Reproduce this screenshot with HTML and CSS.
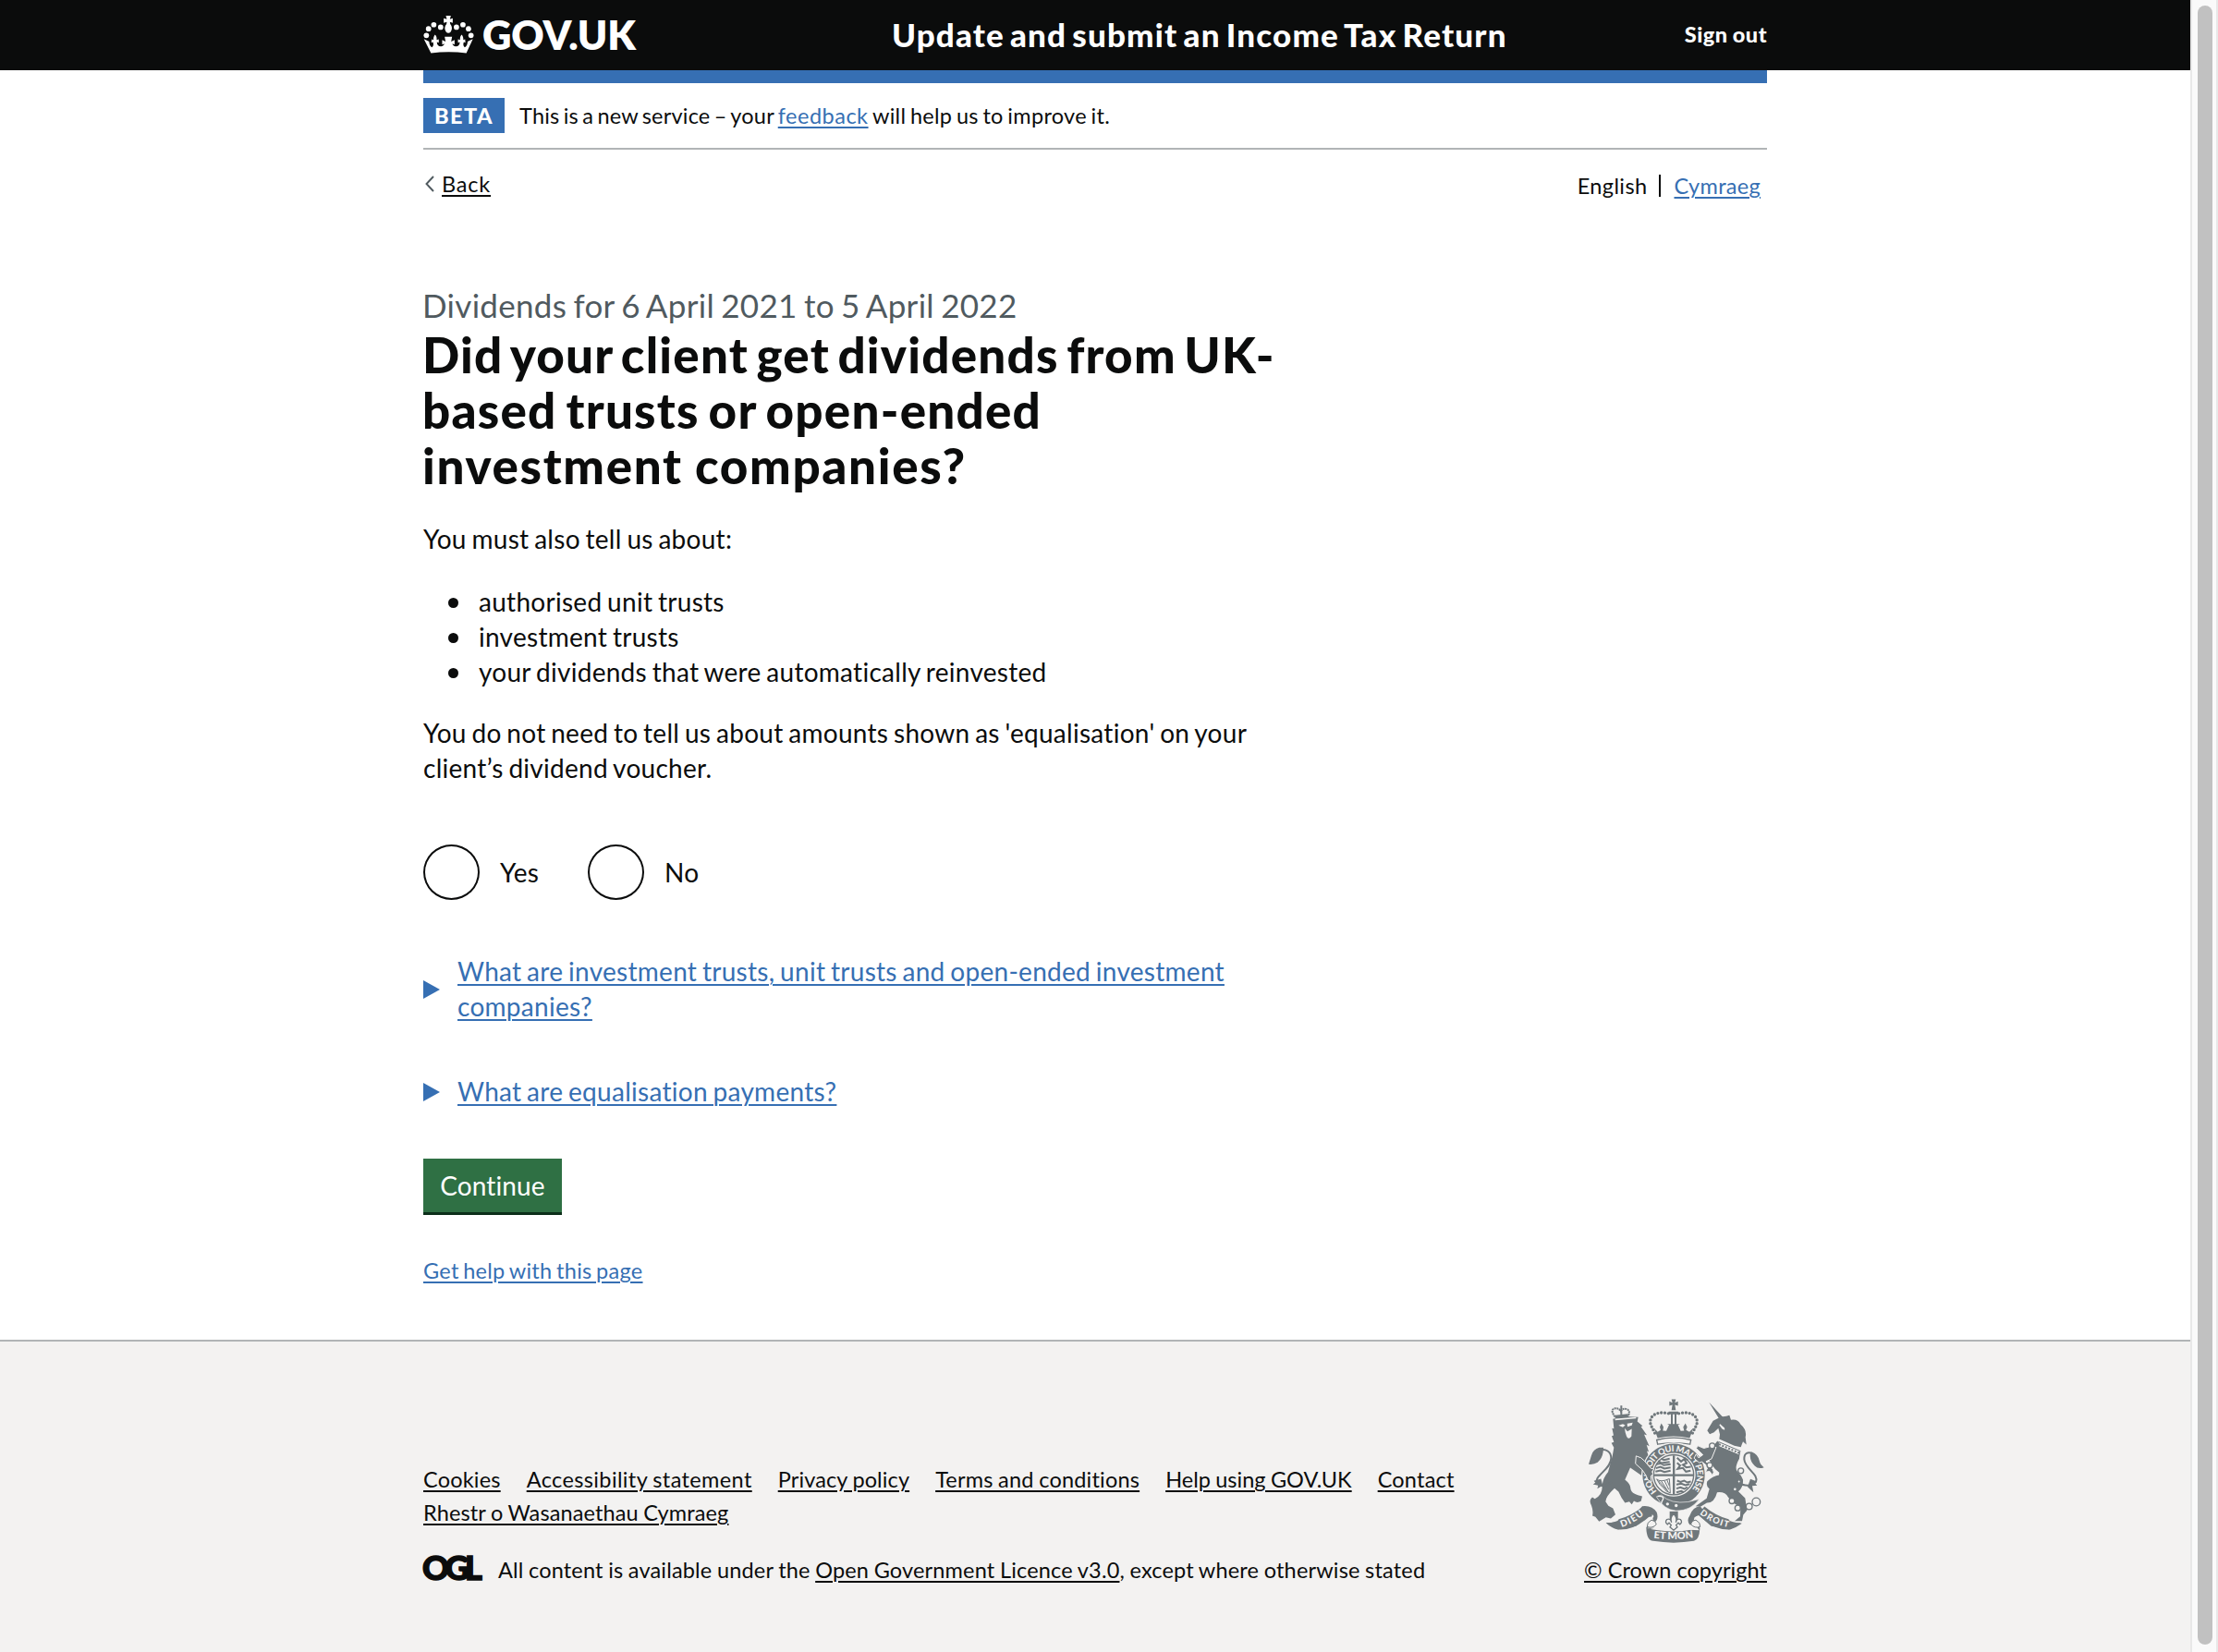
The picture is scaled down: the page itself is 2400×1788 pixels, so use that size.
FILE: index.html
```
<!DOCTYPE html>
<html lang="en">
<head>
<meta charset="utf-8">
<title>Update and submit an Income Tax Return - GOV.UK</title>
<link rel="stylesheet" href="styles.css">
</head>
<body>
<div class="page">
<header class="header">
  <div class="container header-row">
    <a class="logo" href="#">
      <svg class="crown" viewBox="24 20 164 122" fill="#fff">
        <circle cx="34" cy="83.500" r="8.500"/><circle cx="41" cy="62" r="8.500"/><circle cx="58" cy="49" r="8.500"/><circle cx="80" cy="57" r="8.500"/>
        <circle cx="131" cy="57" r="8.500"/><circle cx="152" cy="49" r="8.500"/><circle cx="170" cy="62" r="8.500"/><circle cx="178" cy="83.500" r="8.500"/>
        <path d="M97 20h16l-3 11 9-3v15l-9-3 1 7c5 6 7 13 4 20-2 5-5 9-10 9s-8-4-10-9c-3-7-1-14 4-20l1-7-10 3V28l10 3z"/>
        <path d="M26 95l17 8c0 8 3 15 9 19 5-5 6-10 3-17l-5 2 1-11 6 2c-1-6 1-12 5-17 5 5 6 11 5 17l7-2v11l-6-2c0 9 5 14 13 14 6-1 10-4 11-9l-7 3V98l11 5-3-15h24l-3 15 11-5v15l-7-3c1 5 5 8 11 9 8 0 13-5 13-14l-6 2V96l7 2c-1-6 0-12 5-17 4 5 6 11 5 17l6-2 1 11-5-2c-3 7-2 12 3 17 6-4 9-11 9-19l17-8-21 46c-37-5-77-5-114 0z"/>
      </svg>
      <span class="logo-text">GOV.UK</span>
    </a>
    <a class="service-name" href="#">Update and submit an Income Tax Return</a>
    <a class="sign-out" href="#">Sign out</a>
  </div>
</header>
<div class="container">
  <div class="blue-bar"></div>
  <div class="phase">
    <strong class="tag">BETA</strong>
    <span class="phase-text">This is a new service – your <a class="link feedback" href="#">feedback</a> <span class="phase-end">will help us to improve it.</span></span>
  </div>
  <div class="subnav">
    <a class="back" href="#"><svg class="chevron" viewBox="0 0 10 18"><path d="M9 1L1.500 9 9 17" fill="none" stroke="#505a5f" stroke-width="1.900"/></svg><span class="back-text">Back</span></a>
    <div class="languages"><span class="english">English</span><span class="divider"></span><a class="link cymraeg" href="#">Cymraeg</a></div>
  </div>
  <main class="main">
    <h1 class="heading"><span class="caption">Dividends for 6 April 2021 to 5 April 2022</span>
      <span class="title t1">Did your client get dividends from UK-</span>
      <span class="title t2">based trusts or open-ended</span>
      <span class="title t3">investment companies?</span>
    </h1>
    <p class="body intro">You must also tell us about:</p>
    <ul class="list">
      <li>authorised unit trusts</li>
      <li>investment trusts</li>
      <li>your dividends that were automatically reinvested</li>
    </ul>
    <p class="body">You do not need to tell us about amounts shown as 'equalisation' on your client’s dividend voucher.</p>
    <div class="radios">
      <label class="radio"><span class="ring"></span><span class="radio-label yes">Yes</span></label>
      <label class="radio"><span class="ring"></span><span class="radio-label">No</span></label>
    </div>
    <div class="details first"><span class="arrow"></span><a class="link" href="#">What are investment trusts, unit trusts and open-ended investment companies?</a></div>
    <div class="details second"><span class="arrow"></span><a class="link" href="#">What are equalisation payments?</a></div>
    <button class="button">Continue</button>
    <p class="help"><a class="link" href="#">Get help with this page</a></p>
  </main>
</div>
<footer class="footer">
  <div class="container footer-row">
    <div class="footer-main">
      <ul class="footer-links">
        <li><a class="a1" href="#">Cookies</a></li><li><a class="a2" href="#">Accessibility statement</a></li><li><a class="a3" href="#">Privacy policy</a></li><li><a class="a4" href="#">Terms and conditions</a></li><li><a class="a5" href="#">Help using GOV.UK</a></li><li><a class="a6" href="#">Contact</a></li><li><a class="a7" href="#">Rhestr o Wasanaethau Cymraeg</a></li>
      </ul>
      <div class="licence">
        <svg class="ogl" viewBox="0 0 62 26"><text x="-1" y="25.500" textLength="65" lengthAdjust="spacing">OGL</text></svg>
        <span class="licence-text">All content is available under the <a href="#">Open Government Licence v3.0</a>, except where otherwise stated</span>
      </div>
    </div>
    <div class="copyright">
      <svg class="crest" viewBox="80 68 576 470" fill="#6f777b">
        <defs>
          <path id="ring-text" d="M308 371A76 76 0 1 1 416 371"/>
          <path id="left-text" d="M193 487Q234 475 272 441"/>
          <path id="mid-text" d="M297 523Q362 531 430 521"/>
          <path id="right-text" d="M446 444Q490 478 540 488"/>
        </defs>
        <!-- crown above the shield -->
        <path d="M355 72h14l-3 11 10-4v14l-10-3 3 17h-14l3-17-10 3V79l10 4zM346 112h31v9h-31zM353 121h6v34h-6zM365 121h6v34h-6z"/>
        <path d="M345 118C300 107 276 133 290 160q7 13 14 29M379 118c45-11 69 15 55 42q-7 13-14 29" fill="none" stroke="#6f777b" stroke-width="10" stroke-linecap="round" stroke-dasharray="0 11.500"/>
        <path d="M298 165l12 13 10-6-3-10 5-12 7 12-2 12 11 1 9-20-6-3h42l-7 3 9 20 11-1-3-12 7-12 6 12-4 10 11 6 13-13-12 33q-52-12-104 0z"/>
        <path d="M307 204q55-14 111 0l-3 14q-53-9-105 0z" fill="none" stroke="#6f777b" stroke-width="4"/>
        <!-- lion -->
        <path d="M172 129q-16-20-4-27 14-4 22 8 10-12 22-5 11 7 0 25" fill="none" stroke="#6f777b" stroke-width="6" stroke-dasharray="6 2"/>
        <path d="M189 92h6v34h-6zM172 124l42-5v8l-42 7zM165 136q27-10 55-8l27 2-3 14 17 14-5 3 19 27-9-2 17 38-9-4 7 22-6-2 8 24q-24 16-22 58l-40-28-17 39q20 16 18 30 4 15 24 20l14 4-4 16q-13 7-23-1l-7 11-8-9-14 4q-12-15-21-36l-13-11q-28 26-29 43l9 14 15 8 8 20-15 13-16-4-22 14-12-15-10-4q4-15-3-33-10-18 3-27l8 5q26-12 24-45 3-24 19-42l14-51 5-28-8-15 8-3-7-20 6-2-5-23 6 1z"/>
        <path d="M183 157l14 6 8-7-8-4zM211 151l18-3-3 9-14 4zM203 166l9 10 14-8-1 24q-10 14-16 0l-4-13zM172 135l68-5v4l-68 6z" fill="#f3f2f1"/>
        <path d="M161 341q-31 21-46 5c-18-23 44-45 44-83 0-20-17-33-39-25" fill="none" stroke="#6f777b" stroke-width="6"/>
        <path d="M120 229q-19 5-25 25l-9 29q17 2 29-6 15-13 18-34l1-14zM126 330l-23 7 5 6-8 5 17 4-3 10 18-10z"/>
        <!-- unicorn -->
        <path d="M477 82l55 59-15 7zM543 124l5 15q22-4 31 14 22 19 16 42l3 24-11-10-7 18-21-4-49-22 2-15-5-20-14 13-14 6-8-12 19-31 25-13 18-2zM504 207l9 13 64 27-2 18q-16 29-7 40 14 13 19 28 2 24-15 38l22 22 6 40-12 14-4 20h-24l18-15 1-31q-23-8-40-31-10-19-36-16-9 35-33 34l-21 13-16-2 36-25 9-31q-12-8-7-25 20-18 38-20L510 310Q482 290 470 248L488 228z"/>
        <path d="M513 152l8 8q9 5 6 12l-8-4-9-13z" fill="#f3f2f1"/>
        <path d="M508 210l70 30-4 13-66-28z" fill="#f3f2f1" stroke="#6f777b" stroke-width="3"/>
        <path d="M509 218l66 28" fill="none" stroke="#6f777b" stroke-width="6" stroke-dasharray="6 5"/>
        <path d="M567 342q43 20 62-2c10-25-36-43-38-73-1-22 14-25 26-19" fill="none" stroke="#6f777b" stroke-width="6"/>
        <path d="M616 243q19 7 24 28 3 14 15 22-18 7-30-5-14-13-15-32l1-12zM611 331l19 7-4 6 7 8-16 1 4 21-19-18z"/>
        <g fill="#f3f2f1" stroke="#6f777b" stroke-width="4">
          <circle cx="580" cy="304" r="9"/><circle cx="551" cy="402" r="9"/><circle cx="570" cy="425" r="9"/><circle cx="607" cy="420" r="10"/><circle cx="630" cy="405" r="13"/><circle cx="561" cy="364" r="6"/><circle cx="574" cy="339" r="5"/>
        </g>
        <!-- garter and shield -->
        <circle cx="362" cy="317" r="105" fill="#f3f2f1"/>
        <path fill-rule="evenodd" d="M362 216a101 101 0 1 0 0.100 0zM362 246a71 71 0 1 1-0.100 0z"/>
        <circle cx="362" cy="317" r="65" fill="none" stroke="#6f777b" stroke-width="4"/>
        <path d="M359 254h7v128h-7zM298 315h129v7H298z"/>
        <g fill="none" stroke="#6f777b" stroke-width="6">
          <path d="M312 272l10 7 27-4M307 283l13-3 10 6 22-3M304 296l15-5 13 6 20-4M303 307l16-4 13 5 20-4M321 265l10 4 18-4"/>
          <path d="M373 262l13 12 10-8 8 13-12 6 11 8 15-2M373 278l10 9-8 11 17-3 10 12 15-3M396 261l12 9"/>
          <path d="M373 336l11 4 12-4 10 6 12-3M371 349l16-3 13 5 14-4M371 362l13-4 13 5 10-6M371 374l16-4 8 4"/>
        </g>
        <path d="M307 331q12 12 41-1l3 46q-14-3-21-15-14-11-23-30zM313 337l28 32M322 338l22 34M332 336l14 29M340 333l8 20" fill="none" stroke="#6f777b" stroke-width="3"/>
        <path d="M306 388l16-5q31 30 87 22l36-9q-26 38-75 38-40-3-64-46z" stroke="#f3f2f1" stroke-width="2"/>
        <path d="M310 387q27-2 14 16-2 14-17 15" fill="none" stroke="#f3f2f1" stroke-width="4"/>
        <circle cx="342" cy="412" r="5" fill="#f3f2f1"/><circle cx="370" cy="417" r="5" fill="#f3f2f1"/>
        <text class="motto" font-size="28"><textPath href="#ring-text" textLength="348" lengthAdjust="spacing">HON SOIT QUI MAL Y PENSE</textPath></text>
        <!-- forelegs laid over the garter -->
        <path d="M240 256l16 6 11 10 21 24 10 3-6 8 3 8-7 6 2 20-12-8-6-14-12-18-22-20z" stroke="#f3f2f1" stroke-width="3"/>
        <path d="M500 228q-22-6-40 3l-19-8-6 8 22 21-14 10-8-12-7 13 17 15 9-3 20 16-9 17 14-2 9 13q7-11 1-20l-22-25 18-9z" stroke="#f3f2f1" stroke-width="3"/>
        <g fill="#f3f2f1" stroke="#6f777b" stroke-width="4"><circle cx="487" cy="223" r="9"/><circle cx="479" cy="286" r="9"/></g>
        <!-- scroll -->
        <path d="M142 473q76 0 118-54 32-4 47 20 6 18-2 28-16 12-28 22l168 8q-10-19-31-18-11-14 0-29 9-29 34-31 46 62 136 56-19 14-39 20-44 2-79-28l-21-19q-16 5-18 17 18 4 20 27-2 36-19 40-66 11-133 0-21-2-22-44 10-14 22-25-1-14-15-8-49 44-99 40-22-6-39-22z"/>
        <path d="M142 473Q180 472 184 461Q225 451 262 420L284 446L240 484L182 494zM582 473Q544 472 540 461Q499 451 462 420L440 446L484 484L542 494z"/>
        <path d="M282 463q11-10 10-17 7 2 4 10zM442 466q-14-3-13-10 9-8 13-2z" fill="#f3f2f1"/>
        <path d="M273 490q21 8 34-6 4-9 16-10h78q7 18 44 14-44 14-88 13-49-1-84-11z" fill="#f3f2f1"/>
        <path d="M276 486q-2-14 14-22 14 2 16 14-12 14-30 8zM448 486q2-14-14-22-14 2-16 14 12 14 30 8z" fill="#f3f2f1" stroke="#6f777b" stroke-width="3"/>
        <path d="M349 436h27v25h-27z"/>
        <path d="M362 444q13 12 7 28 3-15 15-10 8 9-2 16l-5-5-7 7 4 7-12 10-12-10 4-7-7-7-5 5q-10-7-2-16 12-5 15 10-6-16 7-28z" fill="#f3f2f1" stroke="#6f777b" stroke-width="4"/>
        <text class="motto" font-size="30"><textPath href="#left-text" textLength="84">DIEU</textPath></text>
        <text class="motto" font-size="33"><textPath href="#mid-text" textLength="130">ET MON</textPath></text>
        <text class="motto" font-size="28"><textPath href="#right-text" textLength="104">DROIT</textPath></text>
      </svg>
      <a href="#">© Crown copyright</a>
    </div>
  </div>
</footer>
</div>
<div class="scrollbar"><div class="thumb"></div></div>
</body>
</html>
```
FILE: styles.css
```
* { box-sizing: border-box; }
body {
  margin: 0;
  display: flex;
  height: 1788px;
  overflow: hidden;
  background: #fff;
  color: #0b0c0c;
  font: 23.5px/38px Lato, "Noto Sans", sans-serif;
  font-variant-ligatures: none;
}
a { color: inherit; }
a, .back-text {
  text-decoration-thickness: 2px;
  text-underline-offset: 2.500px;
}
p, ul, h1 { margin: 0; padding: 0; list-style: none; }
.page { width: 2370px; display: flex; flex-direction: column; }
.container { width: 1454px; margin-left: 458px; }
.link { color: #366fb3; }

.header { background: #0b0c0c; color: #fff; height: 76px; }
.header a { text-decoration: none; }
.header-row { display: grid; grid-template-columns: 508px 1fr auto; align-items: center; height: 76px; }
.logo { display: flex; align-items: center; gap: 9px; padding-bottom: 2px; }
.crown { width: 55px; height: 41px; }
.logo-text { font-size: 43.500px; font-weight: 800; letter-spacing: -.15px; line-height: 60px; }
.service-name { font-size: 35px; font-weight: 900; letter-spacing: 1.150px; word-spacing: -3.300px; padding-bottom: 3px; margin-left: -1px; white-space: nowrap; }
.sign-out { font-weight: 900; letter-spacing: .5px; word-spacing: -1px; padding-bottom: 2px; }

.blue-bar { height: 14px; background: #366fb3; }
.phase { display: flex; align-items: center; gap: 16px; padding: 16px 0; border-bottom: 2px solid #b1b4b6; }
.tag { width: 88px; height: 38px; background: #366fb3; color: #fff; text-align: center; font-weight: 900; letter-spacing: 1.500px; }
.phase-text { letter-spacing: .2px; word-spacing: -1.900px; }
.feedback { letter-spacing: .5px; }
.phase-end { letter-spacing: .3px; word-spacing: -1.700px; }
.subnav { display: flex; justify-content: space-between; padding-top: 18px; height: 145px; }
.back { display: flex; gap: 8px; height: 38px; padding-left: 2px; text-decoration: none; }
.chevron { width: 10px; height: 18px; margin-top: 10px; }
.back-text { text-decoration-line: underline; letter-spacing: .8px; }
.languages { display: flex; align-items: center; height: 38px; margin-top: 2px; padding-right: 7px; }
.english { letter-spacing: .4px; }
.divider { width: 2px; height: 24px; background: #0b0c0c; margin: 0 14px 0 13px; }
.cymraeg { letter-spacing: .3px; }

.main { font-size: 28px; width: 960px; letter-spacing: .28px; word-spacing: -1.700px; }
.caption { display: block; font-size: 35px; line-height: 47px; font-weight: 400; color: #505a5f; letter-spacing: .3px; word-spacing: -2px; margin-left: -1px; }
.heading { margin-bottom: 30px; }
.title { display: block; font-size: 53px; line-height: 60px; font-weight: 900; margin-left: -1px; white-space: nowrap; }
.t1 { letter-spacing: 1.200px; word-spacing: -5.300px; }
.t2 { letter-spacing: 1.200px; word-spacing: -3.800px; }
.t3 { letter-spacing: 1.650px; word-spacing: -1px; }
.body { width: 920px; }
.list { margin: 30px 0 28px; }
.list li { display: flex; align-items: center; }
.list li::before { content: ""; width: 11px; height: 11px; border-radius: 50%; background: #0b0c0c; margin: 2px 22px 0 27px; }
.radios { display: flex; margin: 64px 0 58px; }
.radio { display: flex; align-items: center; }
.ring { width: 61px; height: 60px; border: 2px solid #0b0c0c; border-radius: 50%; }
.radio-label { margin-left: 22px; padding-bottom: 1px; }
.yes { width: 95px; }
.details { display: flex; align-items: center; }
.details .link { width: 850px; }
.arrow { width: 18px; height: 20px; margin: 2px 19px 0 0; background: #366fb3; clip-path: polygon(0 0, 100% 50%, 0 100%); }
.second { margin: 54px 0; }
.button { display: block; width: 150px; height: 58px; padding: 0; border: 0; background: #2f7044; box-shadow: 0 3px 0 #0c2f1a; color: #fff; font: inherit; line-height: 58px; letter-spacing: .1px; }
.help { margin-top: 44px; font-size: 23.500px; line-height: 38px; }

.footer { margin-top: 56px; flex: 1; border-top: 2px solid #b1b4b6; background: #f3f2f1; }
.footer-row { display: flex; justify-content: space-between; }
.footer-main { width: 1200px; padding-top: 131px; letter-spacing: .2px; word-spacing: -.700px; }
.footer-links { display: flex; flex-wrap: wrap; column-gap: 28px; line-height: 36px; }
.footer-links .a2 { letter-spacing: .38px; }
.footer-links .a3, .footer-links .a7 { letter-spacing: .12px; }
.footer-links .a4 { letter-spacing: .2px; }
.footer-links .a5 { letter-spacing: .02px; }
.licence { display: flex; gap: 19px; margin-top: 25px; white-space: nowrap; letter-spacing: .18px; }
.ogl { width: 62px; height: 26px; margin-top: 4px; overflow: visible; font-size: 36px; font-weight: 900; fill: #0b0c0c; stroke: #0b0c0c; stroke-width: 1.500px; }
.copyright { display: flex; flex-direction: column; align-items: flex-end; padding-top: 61px; white-space: nowrap; letter-spacing: .05px; }
.crest { width: 192px; height: 157px; margin: 0 3px 10px 0; }
.motto { font-family: Lato, sans-serif; font-weight: 900; fill: #f3f2f1; }

.scrollbar { width: 30px; height: 1788px; border: solid #e8e8e8; border-width: 0 2px; background: #fafafa; padding: 6px 0 0 6px; }
.thumb { width: 16px; height: 1774px; border-radius: 8px; background: #c1c1c1; }
```
